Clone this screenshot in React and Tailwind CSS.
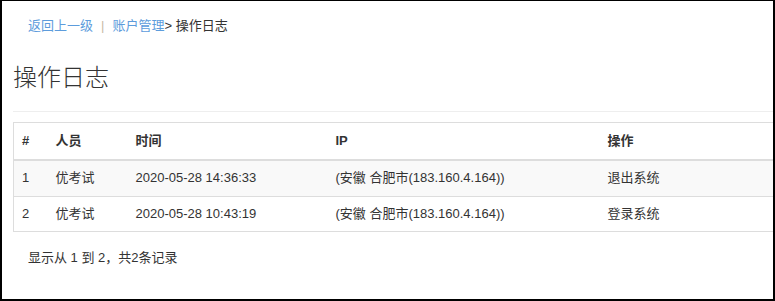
const logs = [
  { id: 1, user: '优考试', time: '2020-05-28 14:36:33', ip: '(安徽 合肥市(183.160.4.164))', action: '退出系统' },
  { id: 2, user: '优考试', time: '2020-05-28 10:43:19', ip: '(安徽 合肥市(183.160.4.164))', action: '登录系统' },
];

const App = () => {
  return (
    <div
      className="w-[775px] h-[301px] overflow-hidden bg-white border-t border-l-2 border-r-2 border-b-2 border-black text-[13px] leading-[18.5px] text-[#333]"
      style={{ fontFamily: '"Liberation Sans", "Noto Sans CJK SC", sans-serif' }}
    >
      {/* Breadcrumb */}
      <div className="pl-[26px] pt-[16px] flex items-center">
        <a className="text-[#5d9cdc]">返回上一级</a>
        <span className="mx-[8px] text-[#c8b9a6]">|</span>
        <a className="text-[#5d9cdc]">账户管理</a>
        <span>&gt; 操作日志</span>
      </div>

      {/* Title */}
      <div className="ml-[11px] mt-[27px] w-[800px] pb-[18px] border-b border-[#eee]">
        <h1 className="text-[24px] leading-[30px] font-light">操作日志</h1>
      </div>

      {/* Table */}
      <table className="ml-[11px] mt-[10px] w-[800px] border border-[#ddd] border-collapse">
        <thead>
          <tr className="border-b-2 border-[#ddd]">
            <th className="w-[34px] px-[8px] py-[9px] text-left font-bold">#</th>
            <th className="w-[80px] px-[8px] py-[9px] text-left font-bold">人员</th>
            <th className="w-[200px] px-[8px] py-[9px] text-left font-bold">时间</th>
            <th className="w-[272px] px-[8px] py-[9px] text-left font-bold">IP</th>
            <th className="px-[8px] py-[9px] text-left font-bold">操作</th>
          </tr>
        </thead>
        <tbody>
          {logs.map((log, index) => (
            <tr key={log.id} className={`border-b border-[#ddd] ${index % 2 === 0 ? 'bg-[#f9f9f9]' : 'bg-white'}`}>
              <td className="px-[8px] py-[8px]">{log.id}</td>
              <td className="px-[8px] py-[8px]">{log.user}</td>
              <td className="px-[8px] py-[8px]">{log.time}</td>
              <td className="px-[8px] py-[8px]">{log.ip}</td>
              <td className="px-[8px] py-[8px]">{log.action}</td>
            </tr>
          ))}
        </tbody>
      </table>

      {/* Pagination info */}
      <div className="pl-[26px] mt-[17px]">显示从 1 到 2，共2条记录</div>
    </div>
  );
};

export default App;
